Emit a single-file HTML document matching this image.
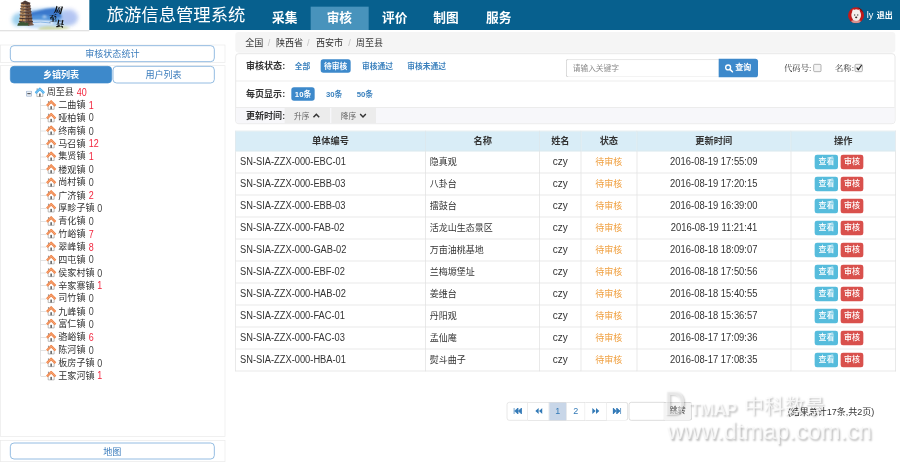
<!DOCTYPE html>
<html lang="zh-CN">
<head>
<meta charset="utf-8">
<title>旅游信息管理系统</title>
<style>
*{box-sizing:border-box;margin:0;padding:0}
html,body{width:900px;height:470px;overflow:hidden;background:#fff}
body{font-family:"Liberation Sans","Noto Sans CJK SC",sans-serif;color:#333}
#w{position:absolute;left:0;top:0;width:1350px;height:705px;transform:scale(.6666667);transform-origin:0 0;font-size:13.55px;line-height:20px;overflow:hidden;background:#fff}
.abs{position:absolute}
#hd{left:0;top:0;width:1350px;height:45px;background:#07608e}
#logo{left:0;top:0;width:133.5px;height:45px;background:#fff}
#logoline{left:0;top:45px;width:133.5px;height:1.5px;background:#e2e2e2}
#title{left:160px;top:0;height:45px;line-height:44px;font-size:26px;color:#fff;white-space:nowrap}
.nav{top:9.6px;height:35.4px;line-height:34px;font-size:19px;font-weight:bold;color:#fff;white-space:nowrap}
#navact{left:466px;top:9.6px;width:87px;height:35.4px;background:#4893bc}
.user{top:0;height:45px;line-height:46px;color:#fff;font-size:12px;white-space:nowrap}
/* left */
.pbox{border:1.5px solid #e9e9e9;background:#fff}
.btn-o{border:1.5px solid #5f9bd3;border-radius:6px;background:#fff;color:#3a7cbc;font-size:13.6px;text-align:center;white-space:nowrap}
.btn-a{background:#3d89cb;border:1.5px solid #3d89cb;color:#fff;font-weight:bold;font-size:13.6px;text-align:center;white-space:nowrap}
#tree{left:0;top:129px;width:330px;font-size:13.55px;list-style:none}
#tree li{position:relative;height:19.357px;line-height:19.357px;white-space:nowrap;list-style:none}
#tree li.root{height:19.1px}
.hs{position:absolute;width:15.5px;height:15.5px;top:1.5px}
#tree li .hs{left:69px}
#tree li.root .hs{left:52px}
#tree li .nm{display:inline-block;margin-left:87.5px;color:#333;vertical-align:top}
#tree li.root .nm{margin-left:70px}
#tree li .r,#tree li .z{display:inline-block;vertical-align:top;margin-left:4.5px;font-size:16px;transform:scaleX(.84);transform-origin:0 50%}
.r{color:#f2243c}.z{color:#444}
.ln{position:absolute;left:60.2px;top:0;width:9px;height:100%;border-left:1.3px solid #d4d4d4}
.ln:after{content:"";position:absolute;left:0;top:9.5px;width:8px;border-top:1.3px solid #d4d4d4}
#tree li:last-child .ln{height:10px}
/* main */
#bc{left:353px;top:47.5px;width:990px;height:31.8px;background:#f5f5f5;border-radius:5px;line-height:32px;white-space:nowrap}
#bc span{position:absolute;top:1.500px}
#bc .s{color:#c4c4c4}
#fp{left:353px;top:80.3px;width:990px;height:105.5px;border:1px solid #ddd;border-radius:5px;background:#fff;overflow:hidden}
#fp .lb{position:absolute;left:15px;font-weight:bold;font-size:13.55px;color:#333;white-space:nowrap}
#fp .lk{position:absolute;font-size:11.6px;font-weight:bold;color:#3a80bd;white-space:nowrap}
#fp .pill{position:absolute;height:20px;line-height:20px;border-radius:4px;background:#3d89cb;color:#fff;font-weight:bold;font-size:11.6px;text-align:center;white-space:nowrap}
#fp .hl{position:absolute;left:0;width:100%;height:1px;background:#e3e3e3}
#r3{position:absolute;left:0;top:79.5px;width:100%;height:25px;background:#f7f7fa}
.sb{position:absolute;top:79.5px;height:24px;background:#ececec;color:#666;font-size:11.6px;line-height:24px;white-space:nowrap}
#q{position:absolute;left:495px;top:6px;width:230px;height:28px;border:1px solid #ccc;border-right:0;border-radius:4px 0 0 4px;font-size:11.6px;color:#8a8a8a;line-height:26px;padding-left:9px;box-shadow:inset 0 1px 1px rgba(0,0,0,.075)}
#qb{position:absolute;left:724px;top:6px;width:58.5px;height:28px;background:#3d89cb;border-radius:0 4px 4px 0;color:#fff;font-weight:bold;font-size:12px;line-height:27px;white-space:nowrap}
.kl{position:absolute;top:7.5px;font-family:"Liberation Serif","Noto Serif CJK SC",serif;font-size:12.5px;color:#333;white-space:nowrap;line-height:26px}
.cb{position:absolute;width:12px;height:12px;border:1px solid #8f8f8f;border-radius:2px;background:#f4f4f4}
/* table */
#tb{left:352.5px;top:196px;width:990.5px;border-collapse:collapse;table-layout:fixed;font-size:13.5px}
#tb th{height:30px;background:#d9edf7;border:1px solid #dfe6ea;font-weight:bold;font-size:13.8px;text-align:center;color:#333;padding:0;line-height:18px}
#tb td{height:33px;border:1px solid #dedede;padding:0;line-height:20px;white-space:nowrap;color:#333;vertical-align:middle}
#tb td.c{text-align:center}
#tb td.c1{padding-left:6px}
.sx{display:inline-block;font-size:15px;transform:scaleX(.93);transform-origin:0 50%}
.sd{display:inline-block;font-size:15px;transform:scaleX(.94);transform-origin:50% 50%}
#tb td.nm3{font-size:15px}
#tb td.op{padding-right:12px}
#tb td.c2{padding-left:5.5px}
#tb td.st{color:#f0a040}
.bx{display:inline-block;width:34.8px;height:22px;line-height:21px;border-radius:3.5px;color:#fff;font-size:12px;text-align:center;vertical-align:middle;font-weight:500}
.bi{background:#56bcdc;margin-right:3.6px}
.bd{background:#d9504c}
/* pager */
.pg{top:602.5px;height:28px;border:1px solid #ddd;border-left:0;background:#fff;color:#337ab7;text-align:center;line-height:26px;font-size:13.5px}
.wm{color:rgba(255,255,255,.72);white-space:nowrap;text-shadow:2px 2px 3px rgba(0,0,0,.27)}
</style>
</head>
<body>
<div id="w">
<!-- header -->
<div id="hd" class="abs"></div>
<div id="logo" class="abs">
<svg width="133.5" height="45" viewBox="0 0 133.5 45">
<defs>
<filter id="b1" x="-30%" y="-30%" width="160%" height="160%"><feGaussianBlur stdDeviation="3"/></filter>
<filter id="b2" x="-30%" y="-30%" width="160%" height="160%"><feGaussianBlur stdDeviation="1.200"/></filter>
<filter id="b3" x="-30%" y="-30%" width="160%" height="160%"><feGaussianBlur stdDeviation=".55"/></filter>
</defs>
<ellipse cx="68" cy="27.500" rx="46" ry="14" fill="#a9cff2" filter="url(#b1)"/>
<ellipse cx="104" cy="26" rx="13" ry="12" fill="#b4c2f2" opacity=".85" filter="url(#b1)"/>
<ellipse cx="27" cy="30" rx="9" ry="9" fill="#9fd2ee" filter="url(#b1)"/>
<path d="M46 18.500L56 16L69 13.300L81 11.700L88 13L93 27L46 27.500Z" fill="#3a78cc" filter="url(#b2)"/>
<path d="M47 24Q60 21 72 23Q82 25 90 27L90 31.500Q68 33 47 30Z" fill="#4f92da" filter="url(#b2)"/>
<path d="M63 26.500L66.500 22.500L71 26.800Z" fill="#f4f8fd" opacity=".75" filter="url(#b2)"/>
<path d="M46 31Q62 29.500 80 32L80 37.500Q62 39 46 37Z" fill="#dbe9f8" filter="url(#b2)"/>
<path d="M47 33.800Q60 32 76 34.500" stroke="#7fb0e4" stroke-width="1.300" fill="none" filter="url(#b3)"/>
<path d="M58 42Q70 37.500 82 40.500Q94 37.500 106 42.500Q82 45.500 58 44.500Z" fill="#cdd6a2" filter="url(#b2)"/>
<g filter="url(#b3)">
<path d="M37.600 0.800L45.500 4.600L38.400 5.600L31.200 4.600Z" fill="#4b3a36"/>
<path d="M32.00 4.00L37.84 4.60L37.88 8.70L31.59 8.10Z" fill="#c0915f"/>
<path d="M37.84 4.60L44.70 4.00L45.28 8.10L37.88 8.70Z" fill="#7a5641"/>
<path d="M30.90 4.00L37.84 4.70L45.80 4.00L45.30 5.50L37.84 6.20L31.40 5.50Z" fill="#43322f"/>
<rect x="34.42" y="6.60" width="1.100" height="0.90" fill="#4a3228"/>
<rect x="40.77" y="6.60" width="1.100" height="0.90" fill="#3a2620"/>
<path d="M31.59 8.10L37.88 8.70L37.93 13.00L31.15 12.40Z" fill="#c0915f"/>
<path d="M37.88 8.70L45.28 8.10L45.88 12.40L37.93 13.00Z" fill="#7a5641"/>
<path d="M30.49 8.10L37.88 8.80L46.38 8.10L45.88 9.60L37.88 10.30L30.99 9.60Z" fill="#43322f"/>
<rect x="34.24" y="10.70" width="1.100" height="1.10" fill="#4a3228"/>
<rect x="41.08" y="10.70" width="1.100" height="1.10" fill="#3a2620"/>
<path d="M31.15 12.40L37.93 13.00L37.97 17.50L30.70 16.90Z" fill="#c0915f"/>
<path d="M37.93 13.00L45.88 12.40L46.51 16.90L37.97 17.50Z" fill="#7a5641"/>
<path d="M30.05 12.40L37.93 13.10L46.98 12.40L46.48 13.90L37.93 14.60L30.55 13.90Z" fill="#43322f"/>
<rect x="34.04" y="15.00" width="1.100" height="1.30" fill="#4a3228"/>
<rect x="41.40" y="15.00" width="1.100" height="1.30" fill="#3a2620"/>
<path d="M30.70 16.90L37.97 17.50L38.02 22.20L30.22 21.60Z" fill="#c0915f"/>
<path d="M37.97 17.50L46.51 16.90L47.18 21.60L38.02 22.20Z" fill="#7a5641"/>
<path d="M29.60 16.90L37.97 17.60L47.61 16.90L47.11 18.40L37.97 19.10L30.10 18.40Z" fill="#43322f"/>
<rect x="33.84" y="19.50" width="1.100" height="1.50" fill="#4a3228"/>
<rect x="41.74" y="19.50" width="1.100" height="1.50" fill="#3a2620"/>
<path d="M30.22 21.60L38.02 22.20L38.07 27.10L29.73 26.50Z" fill="#c0915f"/>
<path d="M38.02 22.20L47.18 21.60L47.87 26.50L38.07 27.10Z" fill="#7a5641"/>
<path d="M29.12 21.60L38.02 22.30L48.28 21.60L47.78 23.10L38.02 23.80L29.62 23.10Z" fill="#43322f"/>
<rect x="33.62" y="24.20" width="1.100" height="1.70" fill="#4a3228"/>
<rect x="42.10" y="24.20" width="1.100" height="1.70" fill="#3a2620"/>
<path d="M29.73 26.50L38.07 27.10L38.12 32.10L29.22 31.50Z" fill="#c0915f"/>
<path d="M38.07 27.10L47.87 26.50L48.57 31.50L38.12 32.10Z" fill="#7a5641"/>
<path d="M28.63 26.50L38.07 27.20L48.97 26.50L48.47 28.00L38.07 28.70L29.13 28.00Z" fill="#43322f"/>
<rect x="33.40" y="29.10" width="1.100" height="1.80" fill="#4a3228"/>
<rect x="42.47" y="29.10" width="1.100" height="1.80" fill="#3a2620"/>
<path d="M29.22 31.50L38.12 32.10L38.18 37.30L28.70 36.70Z" fill="#c0915f"/>
<path d="M38.12 32.10L48.57 31.50L49.30 36.70L38.18 37.30Z" fill="#7a5641"/>
<path d="M28.12 31.50L38.12 32.20L49.67 31.50L49.17 33.00L38.12 33.70L28.62 33.00Z" fill="#43322f"/>
<rect x="33.17" y="34.10" width="1.100" height="2.00" fill="#4a3228"/>
<rect x="42.85" y="34.10" width="1.100" height="2.00" fill="#3a2620"/>
<path d="M26 38.500q0.500 -5 3.500 -4.500q1.500 -2.500 4 -0.500q2.500 -1.500 4.500 1q2.500 -1.500 4.500 0.500l1.500 3.500z" fill="#3a5636"/>
<path d="M42 38.500l8.500 -0.800l0 -1.200l-8 0z" fill="#6a4a3a"/>
</g>
<g font-family="'Liberation Serif','Noto Serif CJK SC',serif" font-weight="900" fill="#0b0b0b">
<text x="83.500" y="20.500" font-size="13.500" transform="rotate(7 90 15) skewX(-8)">周</text>
<text x="77.500" y="31.500" font-size="12.500" transform="rotate(-8 83 28) skewX(-8)">至</text>
<text x="87.500" y="40.800" font-size="12.800" transform="rotate(5 94 36) skewX(-6)">县</text>
</g>
</svg>
</div>
<div id="logoline" class="abs"></div>
<div id="title" class="abs">旅游信息管理系统</div>
<div id="navact" class="abs"></div>
<div class="abs nav" style="left:408px">采集</div>
<div class="abs nav" style="left:490px">审核</div>
<div class="abs nav" style="left:573px">评价</div>
<div class="abs nav" style="left:650px">制图</div>
<div class="abs nav" style="left:729px">服务</div>
<div class="abs" style="left:1271.900px;top:10.500px;width:24.200px;height:24.200px;border-radius:50%;background:#c21a1a;overflow:hidden">
<svg width="24.200" height="24.200" viewBox="0 0 24.200 24.200"><path d="M14 0L24 8V0Z" fill="#5a0d0d"/><path d="M0 18L8 24H18L24 18V24H0Z" fill="#a31414"/><ellipse cx="12.300" cy="11.600" rx="7.300" ry="8.800" fill="#f4efec"/><path d="M6 7L7.500 2.500L10.500 5.500ZM18 7L17 2.500L14 5.500Z" fill="#f4efec"/><circle cx="10" cy="11.500" r="1" fill="#4a4040"/><circle cx="14.600" cy="11.500" r="1" fill="#4a4040"/><ellipse cx="12.300" cy="15" rx="1.700" ry="1.300" fill="#3a3030"/><path d="M5 20Q12 17 19 20L19 24H5Z" fill="#e9e2de" opacity=".6"/></svg>
</div>
<div class="abs user" style="left:1300px;font-size:13.800px;top:-0.500px">ly</div>
<div class="abs user" style="left:1315px;font-weight:bold">退出</div>

<!-- left column -->
<div class="abs pbox" style="left:0;top:66.500px;width:337.500px;height:27.500px"></div>
<div class="abs pbox" style="left:0;top:98px;width:337.500px;height:556.500px"></div>
<div class="abs btn-o" style="left:15px;top:68px;width:307px;height:24.5px;line-height:25.5px">审核状态统计</div>
<div class="abs btn-o" style="left:168.500px;top:99px;width:153.500px;height:25.500px;line-height:26.500px">用户列表</div>
<div class="abs btn-a" style="left:15px;top:99px;width:153px;height:25.500px;line-height:26.500px;border-radius:6px">乡镇列表</div>
<ul id="tree" class="abs">
<li class="root"><svg class="abs" style="left:39px;top:6.500px" width="9" height="9" viewBox="0 0 9 9"><rect x=".5" y=".5" width="8" height="8" rx="1" fill="#e9eff6" stroke="#86a0c2"/><path d="M2 4.500H7" stroke="#222" stroke-width="1.300"/></svg><svg class="hs" viewBox="0 0 16 16"><rect x="3" y="1.600" width="1.800" height="3.500" fill="#9a9a9a"/><path d="M3.400 8V14.400H12.600V8L8 3.800Z" fill="#fff" stroke="#a0a0a0" stroke-width="1.100"/><rect x="6.700" y="9.600" width="2.600" height="4.800" fill="#6e6e6e"/><path d="M1.300 9L8 2.400L14.700 9" fill="none" stroke="#4fb0ee" stroke-width="3.700" stroke-linejoin="miter"/><path d="M1.800 8.600L8 2.500L14.200 8.600" fill="none" stroke="#c8e8fb" stroke-width="1.100" stroke-dasharray="1.300 .9"/></svg><span class="nm">周至县</span><span class="r">40</span></li>
<li><i class="ln"></i><svg class="hs" viewBox="0 0 16 16"><rect x="3" y="1.600" width="1.800" height="3.500" fill="#9a9a9a"/><path d="M3.400 8V14.400H12.600V8L8 3.800Z" fill="#fff" stroke="#a0a0a0" stroke-width="1.100"/><rect x="6.700" y="9.600" width="2.600" height="4.800" fill="#6e6e6e"/><path d="M1.300 9L8 2.400L14.700 9" fill="none" stroke="#f0854a" stroke-width="3.700" stroke-linejoin="miter"/><path d="M1.800 8.600L8 2.500L14.200 8.600" fill="none" stroke="#fbd0b0" stroke-width="1.100" stroke-dasharray="1.300 .9"/></svg><span class="nm">二曲镇</span><span class="r">1</span></li>
<li><i class="ln"></i><svg class="hs" viewBox="0 0 16 16"><rect x="3" y="1.600" width="1.800" height="3.500" fill="#9a9a9a"/><path d="M3.400 8V14.400H12.600V8L8 3.800Z" fill="#fff" stroke="#a0a0a0" stroke-width="1.100"/><rect x="6.700" y="9.600" width="2.600" height="4.800" fill="#6e6e6e"/><path d="M1.300 9L8 2.400L14.700 9" fill="none" stroke="#f0854a" stroke-width="3.700" stroke-linejoin="miter"/><path d="M1.800 8.600L8 2.500L14.200 8.600" fill="none" stroke="#fbd0b0" stroke-width="1.100" stroke-dasharray="1.300 .9"/></svg><span class="nm">哑柏镇</span><span class="z">0</span></li>
<li><i class="ln"></i><svg class="hs" viewBox="0 0 16 16"><rect x="3" y="1.600" width="1.800" height="3.500" fill="#9a9a9a"/><path d="M3.400 8V14.400H12.600V8L8 3.800Z" fill="#fff" stroke="#a0a0a0" stroke-width="1.100"/><rect x="6.700" y="9.600" width="2.600" height="4.800" fill="#6e6e6e"/><path d="M1.300 9L8 2.400L14.700 9" fill="none" stroke="#f0854a" stroke-width="3.700" stroke-linejoin="miter"/><path d="M1.800 8.600L8 2.500L14.200 8.600" fill="none" stroke="#fbd0b0" stroke-width="1.100" stroke-dasharray="1.300 .9"/></svg><span class="nm">终南镇</span><span class="z">0</span></li>
<li><i class="ln"></i><svg class="hs" viewBox="0 0 16 16"><rect x="3" y="1.600" width="1.800" height="3.500" fill="#9a9a9a"/><path d="M3.400 8V14.400H12.600V8L8 3.800Z" fill="#fff" stroke="#a0a0a0" stroke-width="1.100"/><rect x="6.700" y="9.600" width="2.600" height="4.800" fill="#6e6e6e"/><path d="M1.300 9L8 2.400L14.700 9" fill="none" stroke="#f0854a" stroke-width="3.700" stroke-linejoin="miter"/><path d="M1.800 8.600L8 2.500L14.200 8.600" fill="none" stroke="#fbd0b0" stroke-width="1.100" stroke-dasharray="1.300 .9"/></svg><span class="nm">马召镇</span><span class="r">12</span></li>
<li><i class="ln"></i><svg class="hs" viewBox="0 0 16 16"><rect x="3" y="1.600" width="1.800" height="3.500" fill="#9a9a9a"/><path d="M3.400 8V14.400H12.600V8L8 3.800Z" fill="#fff" stroke="#a0a0a0" stroke-width="1.100"/><rect x="6.700" y="9.600" width="2.600" height="4.800" fill="#6e6e6e"/><path d="M1.300 9L8 2.400L14.700 9" fill="none" stroke="#f0854a" stroke-width="3.700" stroke-linejoin="miter"/><path d="M1.800 8.600L8 2.500L14.200 8.600" fill="none" stroke="#fbd0b0" stroke-width="1.100" stroke-dasharray="1.300 .9"/></svg><span class="nm">集贤镇</span><span class="r">1</span></li>
<li><i class="ln"></i><svg class="hs" viewBox="0 0 16 16"><rect x="3" y="1.600" width="1.800" height="3.500" fill="#9a9a9a"/><path d="M3.400 8V14.400H12.600V8L8 3.800Z" fill="#fff" stroke="#a0a0a0" stroke-width="1.100"/><rect x="6.700" y="9.600" width="2.600" height="4.800" fill="#6e6e6e"/><path d="M1.300 9L8 2.400L14.700 9" fill="none" stroke="#f0854a" stroke-width="3.700" stroke-linejoin="miter"/><path d="M1.800 8.600L8 2.500L14.200 8.600" fill="none" stroke="#fbd0b0" stroke-width="1.100" stroke-dasharray="1.300 .9"/></svg><span class="nm">楼观镇</span><span class="z">0</span></li>
<li><i class="ln"></i><svg class="hs" viewBox="0 0 16 16"><rect x="3" y="1.600" width="1.800" height="3.500" fill="#9a9a9a"/><path d="M3.400 8V14.400H12.600V8L8 3.800Z" fill="#fff" stroke="#a0a0a0" stroke-width="1.100"/><rect x="6.700" y="9.600" width="2.600" height="4.800" fill="#6e6e6e"/><path d="M1.300 9L8 2.400L14.700 9" fill="none" stroke="#f0854a" stroke-width="3.700" stroke-linejoin="miter"/><path d="M1.800 8.600L8 2.500L14.200 8.600" fill="none" stroke="#fbd0b0" stroke-width="1.100" stroke-dasharray="1.300 .9"/></svg><span class="nm">尚村镇</span><span class="z">0</span></li>
<li><i class="ln"></i><svg class="hs" viewBox="0 0 16 16"><rect x="3" y="1.600" width="1.800" height="3.500" fill="#9a9a9a"/><path d="M3.400 8V14.400H12.600V8L8 3.800Z" fill="#fff" stroke="#a0a0a0" stroke-width="1.100"/><rect x="6.700" y="9.600" width="2.600" height="4.800" fill="#6e6e6e"/><path d="M1.300 9L8 2.400L14.700 9" fill="none" stroke="#f0854a" stroke-width="3.700" stroke-linejoin="miter"/><path d="M1.800 8.600L8 2.500L14.200 8.600" fill="none" stroke="#fbd0b0" stroke-width="1.100" stroke-dasharray="1.300 .9"/></svg><span class="nm">广济镇</span><span class="r">2</span></li>
<li><i class="ln"></i><svg class="hs" viewBox="0 0 16 16"><rect x="3" y="1.600" width="1.800" height="3.500" fill="#9a9a9a"/><path d="M3.400 8V14.400H12.600V8L8 3.800Z" fill="#fff" stroke="#a0a0a0" stroke-width="1.100"/><rect x="6.700" y="9.600" width="2.600" height="4.800" fill="#6e6e6e"/><path d="M1.300 9L8 2.400L14.700 9" fill="none" stroke="#f0854a" stroke-width="3.700" stroke-linejoin="miter"/><path d="M1.800 8.600L8 2.500L14.200 8.600" fill="none" stroke="#fbd0b0" stroke-width="1.100" stroke-dasharray="1.300 .9"/></svg><span class="nm">厚畛子镇</span><span class="z">0</span></li>
<li><i class="ln"></i><svg class="hs" viewBox="0 0 16 16"><rect x="3" y="1.600" width="1.800" height="3.500" fill="#9a9a9a"/><path d="M3.400 8V14.400H12.600V8L8 3.800Z" fill="#fff" stroke="#a0a0a0" stroke-width="1.100"/><rect x="6.700" y="9.600" width="2.600" height="4.800" fill="#6e6e6e"/><path d="M1.300 9L8 2.400L14.700 9" fill="none" stroke="#f0854a" stroke-width="3.700" stroke-linejoin="miter"/><path d="M1.800 8.600L8 2.500L14.200 8.600" fill="none" stroke="#fbd0b0" stroke-width="1.100" stroke-dasharray="1.300 .9"/></svg><span class="nm">青化镇</span><span class="z">0</span></li>
<li><i class="ln"></i><svg class="hs" viewBox="0 0 16 16"><rect x="3" y="1.600" width="1.800" height="3.500" fill="#9a9a9a"/><path d="M3.400 8V14.400H12.600V8L8 3.800Z" fill="#fff" stroke="#a0a0a0" stroke-width="1.100"/><rect x="6.700" y="9.600" width="2.600" height="4.800" fill="#6e6e6e"/><path d="M1.300 9L8 2.400L14.700 9" fill="none" stroke="#f0854a" stroke-width="3.700" stroke-linejoin="miter"/><path d="M1.800 8.600L8 2.500L14.200 8.600" fill="none" stroke="#fbd0b0" stroke-width="1.100" stroke-dasharray="1.300 .9"/></svg><span class="nm">竹峪镇</span><span class="r">7</span></li>
<li><i class="ln"></i><svg class="hs" viewBox="0 0 16 16"><rect x="3" y="1.600" width="1.800" height="3.500" fill="#9a9a9a"/><path d="M3.400 8V14.400H12.600V8L8 3.800Z" fill="#fff" stroke="#a0a0a0" stroke-width="1.100"/><rect x="6.700" y="9.600" width="2.600" height="4.800" fill="#6e6e6e"/><path d="M1.300 9L8 2.400L14.700 9" fill="none" stroke="#f0854a" stroke-width="3.700" stroke-linejoin="miter"/><path d="M1.800 8.600L8 2.500L14.200 8.600" fill="none" stroke="#fbd0b0" stroke-width="1.100" stroke-dasharray="1.300 .9"/></svg><span class="nm">翠峰镇</span><span class="r">8</span></li>
<li><i class="ln"></i><svg class="hs" viewBox="0 0 16 16"><rect x="3" y="1.600" width="1.800" height="3.500" fill="#9a9a9a"/><path d="M3.400 8V14.400H12.600V8L8 3.800Z" fill="#fff" stroke="#a0a0a0" stroke-width="1.100"/><rect x="6.700" y="9.600" width="2.600" height="4.800" fill="#6e6e6e"/><path d="M1.300 9L8 2.400L14.700 9" fill="none" stroke="#f0854a" stroke-width="3.700" stroke-linejoin="miter"/><path d="M1.800 8.600L8 2.500L14.200 8.600" fill="none" stroke="#fbd0b0" stroke-width="1.100" stroke-dasharray="1.300 .9"/></svg><span class="nm">四屯镇</span><span class="z">0</span></li>
<li><i class="ln"></i><svg class="hs" viewBox="0 0 16 16"><rect x="3" y="1.600" width="1.800" height="3.500" fill="#9a9a9a"/><path d="M3.400 8V14.400H12.600V8L8 3.800Z" fill="#fff" stroke="#a0a0a0" stroke-width="1.100"/><rect x="6.700" y="9.600" width="2.600" height="4.800" fill="#6e6e6e"/><path d="M1.300 9L8 2.400L14.700 9" fill="none" stroke="#f0854a" stroke-width="3.700" stroke-linejoin="miter"/><path d="M1.800 8.600L8 2.500L14.200 8.600" fill="none" stroke="#fbd0b0" stroke-width="1.100" stroke-dasharray="1.300 .9"/></svg><span class="nm">侯家村镇</span><span class="z">0</span></li>
<li><i class="ln"></i><svg class="hs" viewBox="0 0 16 16"><rect x="3" y="1.600" width="1.800" height="3.500" fill="#9a9a9a"/><path d="M3.400 8V14.400H12.600V8L8 3.800Z" fill="#fff" stroke="#a0a0a0" stroke-width="1.100"/><rect x="6.700" y="9.600" width="2.600" height="4.800" fill="#6e6e6e"/><path d="M1.300 9L8 2.400L14.700 9" fill="none" stroke="#f0854a" stroke-width="3.700" stroke-linejoin="miter"/><path d="M1.800 8.600L8 2.500L14.200 8.600" fill="none" stroke="#fbd0b0" stroke-width="1.100" stroke-dasharray="1.300 .9"/></svg><span class="nm">辛家寨镇</span><span class="r">1</span></li>
<li><i class="ln"></i><svg class="hs" viewBox="0 0 16 16"><rect x="3" y="1.600" width="1.800" height="3.500" fill="#9a9a9a"/><path d="M3.400 8V14.400H12.600V8L8 3.800Z" fill="#fff" stroke="#a0a0a0" stroke-width="1.100"/><rect x="6.700" y="9.600" width="2.600" height="4.800" fill="#6e6e6e"/><path d="M1.300 9L8 2.400L14.700 9" fill="none" stroke="#f0854a" stroke-width="3.700" stroke-linejoin="miter"/><path d="M1.800 8.600L8 2.500L14.200 8.600" fill="none" stroke="#fbd0b0" stroke-width="1.100" stroke-dasharray="1.300 .9"/></svg><span class="nm">司竹镇</span><span class="z">0</span></li>
<li><i class="ln"></i><svg class="hs" viewBox="0 0 16 16"><rect x="3" y="1.600" width="1.800" height="3.500" fill="#9a9a9a"/><path d="M3.400 8V14.400H12.600V8L8 3.800Z" fill="#fff" stroke="#a0a0a0" stroke-width="1.100"/><rect x="6.700" y="9.600" width="2.600" height="4.800" fill="#6e6e6e"/><path d="M1.300 9L8 2.400L14.700 9" fill="none" stroke="#f0854a" stroke-width="3.700" stroke-linejoin="miter"/><path d="M1.800 8.600L8 2.500L14.200 8.600" fill="none" stroke="#fbd0b0" stroke-width="1.100" stroke-dasharray="1.300 .9"/></svg><span class="nm">九峰镇</span><span class="z">0</span></li>
<li><i class="ln"></i><svg class="hs" viewBox="0 0 16 16"><rect x="3" y="1.600" width="1.800" height="3.500" fill="#9a9a9a"/><path d="M3.400 8V14.400H12.600V8L8 3.800Z" fill="#fff" stroke="#a0a0a0" stroke-width="1.100"/><rect x="6.700" y="9.600" width="2.600" height="4.800" fill="#6e6e6e"/><path d="M1.300 9L8 2.400L14.700 9" fill="none" stroke="#f0854a" stroke-width="3.700" stroke-linejoin="miter"/><path d="M1.800 8.600L8 2.500L14.200 8.600" fill="none" stroke="#fbd0b0" stroke-width="1.100" stroke-dasharray="1.300 .9"/></svg><span class="nm">富仁镇</span><span class="z">0</span></li>
<li><i class="ln"></i><svg class="hs" viewBox="0 0 16 16"><rect x="3" y="1.600" width="1.800" height="3.500" fill="#9a9a9a"/><path d="M3.400 8V14.400H12.600V8L8 3.800Z" fill="#fff" stroke="#a0a0a0" stroke-width="1.100"/><rect x="6.700" y="9.600" width="2.600" height="4.800" fill="#6e6e6e"/><path d="M1.300 9L8 2.400L14.700 9" fill="none" stroke="#f0854a" stroke-width="3.700" stroke-linejoin="miter"/><path d="M1.800 8.600L8 2.500L14.200 8.600" fill="none" stroke="#fbd0b0" stroke-width="1.100" stroke-dasharray="1.300 .9"/></svg><span class="nm">骆峪镇</span><span class="r">6</span></li>
<li><i class="ln"></i><svg class="hs" viewBox="0 0 16 16"><rect x="3" y="1.600" width="1.800" height="3.500" fill="#9a9a9a"/><path d="M3.400 8V14.400H12.600V8L8 3.800Z" fill="#fff" stroke="#a0a0a0" stroke-width="1.100"/><rect x="6.700" y="9.600" width="2.600" height="4.800" fill="#6e6e6e"/><path d="M1.300 9L8 2.400L14.700 9" fill="none" stroke="#f0854a" stroke-width="3.700" stroke-linejoin="miter"/><path d="M1.800 8.600L8 2.500L14.200 8.600" fill="none" stroke="#fbd0b0" stroke-width="1.100" stroke-dasharray="1.300 .9"/></svg><span class="nm">陈河镇</span><span class="z">0</span></li>
<li><i class="ln"></i><svg class="hs" viewBox="0 0 16 16"><rect x="3" y="1.600" width="1.800" height="3.500" fill="#9a9a9a"/><path d="M3.400 8V14.400H12.600V8L8 3.800Z" fill="#fff" stroke="#a0a0a0" stroke-width="1.100"/><rect x="6.700" y="9.600" width="2.600" height="4.800" fill="#6e6e6e"/><path d="M1.300 9L8 2.400L14.700 9" fill="none" stroke="#f0854a" stroke-width="3.700" stroke-linejoin="miter"/><path d="M1.800 8.600L8 2.500L14.200 8.600" fill="none" stroke="#fbd0b0" stroke-width="1.100" stroke-dasharray="1.300 .9"/></svg><span class="nm">板房子镇</span><span class="z">0</span></li>
<li><i class="ln"></i><svg class="hs" viewBox="0 0 16 16"><rect x="3" y="1.600" width="1.800" height="3.500" fill="#9a9a9a"/><path d="M3.400 8V14.400H12.600V8L8 3.800Z" fill="#fff" stroke="#a0a0a0" stroke-width="1.100"/><rect x="6.700" y="9.600" width="2.600" height="4.800" fill="#6e6e6e"/><path d="M1.300 9L8 2.400L14.700 9" fill="none" stroke="#f0854a" stroke-width="3.700" stroke-linejoin="miter"/><path d="M1.800 8.600L8 2.500L14.200 8.600" fill="none" stroke="#fbd0b0" stroke-width="1.100" stroke-dasharray="1.300 .9"/></svg><span class="nm">王家河镇</span><span class="r">1</span></li>
</ul>
<div class="abs pbox" style="left:0;top:660px;width:337.5px;height:32.5px"></div>
<div class="abs btn-o" style="left:15px;top:664px;width:307px;height:24.5px;line-height:25.5px">地图</div>

<!-- breadcrumb -->
<div id="bc" class="abs">
<span style="left:15px">全国</span><span class="s" style="left:48.500px">/</span>
<span style="left:61px">陕西省</span><span class="s" style="left:107.500px">/</span>
<span style="left:121px">西安市</span><span class="s" style="left:169.500px">/</span>
<span style="left:181px">周至县</span>
</div>

<!-- filter -->
<div id="fp" class="abs"><div style="position:absolute;left:0;top:1px;width:100%;height:104.5px">
<div class="lb" style="top:7.500px">审核状态:</div>
<div class="lk" style="left:88px;top:7.500px">全部</div>
<div class="pill" style="left:127px;top:7px;width:45px">待审核</div>
<div class="lk" style="left:189px;top:7.500px">审核通过</div>
<div class="lk" style="left:257px;top:7.500px">审核未通过</div>
<div class="hl" style="top:38.500px"></div>
<div class="lb" style="top:48.500px">每页显示:</div>
<div class="pill" style="left:83px;top:48.500px;width:35px">10条</div>
<div class="lk" style="left:135px;top:48.500px">30条</div>
<div class="lk" style="left:181px;top:48.500px">50条</div>
<div class="hl" style="top:78.500px"></div>
<div id="r3"></div>
<div class="lb" style="top:81.500px">更新时间:</div>
<div class="sb" style="left:73px;width:68px;padding-left:14px">升序<svg style="position:absolute;left:42px;top:7px" width="11" height="9" viewBox="0 0 11 9"><path d="M1.200 7L5.500 2.500L9.800 7" fill="none" stroke="#333" stroke-width="2.200"/></svg></div>
<div class="sb" style="left:143px;width:67px;padding-left:14px">降序<svg style="position:absolute;left:42px;top:7px" width="11" height="9" viewBox="0 0 11 9"><path d="M1.200 2L5.500 6.500L9.800 2" fill="none" stroke="#333" stroke-width="2.200"/></svg></div>
<div id="q">请输入关键字</div>
<div id="qb"><svg style="position:absolute;left:9px;top:7.500px" width="13" height="13" viewBox="0 0 13 13"><circle cx="5.200" cy="5.200" r="3.700" fill="none" stroke="#fff" stroke-width="2"/><path d="M8 8L12 12" stroke="#fff" stroke-width="2.400" stroke-linecap="round"/></svg><span style="position:absolute;left:25px">查询</span></div>
<div class="kl" style="left:822px">代码号:</div>
<div class="cb" style="left:866px;top:13.500px"></div>
<div class="kl" style="left:898.500px">名称:</div>
<div class="cb" style="left:927.500px;top:13.500px"><svg style="position:absolute;left:0;top:-1px" width="11" height="11" viewBox="0 0 11 11"><path d="M2 5.500L4.500 8.500L9.500 1.500" fill="none" stroke="#222" stroke-width="1.800"/></svg></div>
</div></div>

<!-- table -->
<table id="tb" class="abs">
<colgroup><col style="width:285.500px"><col style="width:171px"><col style="width:62px"><col style="width:83.600px"><col style="width:231px"><col style="width:157.400px"></colgroup>
<tr><th>单体编号</th><th>名称</th><th>姓名</th><th>状态</th><th>更新时间</th><th>操作</th></tr>
<tr><td class="c1"><span class="sx">SN-SIA-ZZX-000-EBC-01</span></td><td class="c2">隐真观</td><td class="c nm3">czy</td><td class="c st">待审核</td><td class="c dt"><span class="sd">2016-08-19 17:55:09</span></td><td class="c op"><span class="bx bi">查看</span><span class="bx bd">审核</span></td></tr>
<tr><td class="c1"><span class="sx">SN-SIA-ZZX-000-EBB-03</span></td><td class="c2">八卦台</td><td class="c nm3">czy</td><td class="c st">待审核</td><td class="c dt"><span class="sd">2016-08-19 17:20:15</span></td><td class="c op"><span class="bx bi">查看</span><span class="bx bd">审核</span></td></tr>
<tr><td class="c1"><span class="sx">SN-SIA-ZZX-000-EBB-03</span></td><td class="c2">擂鼓台</td><td class="c nm3">czy</td><td class="c st">待审核</td><td class="c dt"><span class="sd">2016-08-19 16:39:00</span></td><td class="c op"><span class="bx bi">查看</span><span class="bx bd">审核</span></td></tr>
<tr><td class="c1"><span class="sx">SN-SIA-ZZX-000-FAB-02</span></td><td class="c2">活龙山生态景区</td><td class="c nm3">czy</td><td class="c st">待审核</td><td class="c dt"><span class="sd">2016-08-19 11:21:41</span></td><td class="c op"><span class="bx bi">查看</span><span class="bx bd">审核</span></td></tr>
<tr><td class="c1"><span class="sx">SN-SIA-ZZX-000-GAB-02</span></td><td class="c2">万亩油桃基地</td><td class="c nm3">czy</td><td class="c st">待审核</td><td class="c dt"><span class="sd">2016-08-18 18:09:07</span></td><td class="c op"><span class="bx bi">查看</span><span class="bx bd">审核</span></td></tr>
<tr><td class="c1"><span class="sx">SN-SIA-ZZX-000-EBF-02</span></td><td class="c2">兰梅塬堡址</td><td class="c nm3">czy</td><td class="c st">待审核</td><td class="c dt"><span class="sd">2016-08-18 17:50:56</span></td><td class="c op"><span class="bx bi">查看</span><span class="bx bd">审核</span></td></tr>
<tr><td class="c1"><span class="sx">SN-SIA-ZZX-000-HAB-02</span></td><td class="c2">姜维台</td><td class="c nm3">czy</td><td class="c st">待审核</td><td class="c dt"><span class="sd">2016-08-18 15:40:55</span></td><td class="c op"><span class="bx bi">查看</span><span class="bx bd">审核</span></td></tr>
<tr><td class="c1"><span class="sx">SN-SIA-ZZX-000-FAC-01</span></td><td class="c2">丹阳观</td><td class="c nm3">czy</td><td class="c st">待审核</td><td class="c dt"><span class="sd">2016-08-18 15:36:57</span></td><td class="c op"><span class="bx bi">查看</span><span class="bx bd">审核</span></td></tr>
<tr><td class="c1"><span class="sx">SN-SIA-ZZX-000-FAC-03</span></td><td class="c2">孟仙庵</td><td class="c nm3">czy</td><td class="c st">待审核</td><td class="c dt"><span class="sd">2016-08-17 17:09:36</span></td><td class="c op"><span class="bx bi">查看</span><span class="bx bd">审核</span></td></tr>
<tr><td class="c1"><span class="sx">SN-SIA-ZZX-000-HBA-01</span></td><td class="c2">熨斗曲子</td><td class="c nm3">czy</td><td class="c st">待审核</td><td class="c dt"><span class="sd">2016-08-17 17:08:35</span></td><td class="c op"><span class="bx bi">查看</span><span class="bx bd">审核</span></td></tr>
</table>

<!-- pager -->
<div class="abs pg" style="left:760px;width:32px;border-left:1px solid #ddd;border-radius:4px 0 0 4px"><svg width="13" height="9" viewBox="0 0 13 9"><path d="M1 0v9M7 0L2 4.500L7 9zM12.500 0L7.500 4.500L12.500 9z" fill="#337ab7" stroke="#337ab7" stroke-width="1.500" stroke-linejoin="round" style="stroke-width:1.200"/></svg></div>
<div class="abs pg" style="left:792px;width:32px"><svg width="12" height="9" viewBox="0 0 12 9"><path d="M6 0L1 4.500L6 9zM11.500 0L6.500 4.500L11.500 9z" fill="#337ab7"/></svg></div>
<div class="abs pg" style="left:824px;width:26px;background:#c8d6e8">1</div>
<div class="abs pg" style="left:850px;width:28px">2</div>
<div class="abs pg" style="left:878px;width:32px"><svg width="12" height="9" viewBox="0 0 12 9"><path d="M0.500 0L5.500 4.500L0.500 9zM6 0L11 4.500L6 9z" fill="#337ab7"/></svg></div>
<div class="abs pg" style="left:910px;width:31.500px;border-radius:0 4px 4px 0"><svg width="13" height="9" viewBox="0 0 13 9"><path d="M0.500 0L5.500 4.500L0.500 9zM6 0L11 4.500L6 9zM12 0v9" fill="#337ab7" stroke="#337ab7" stroke-width="1.200"/></svg></div>
<div class="abs" style="left:942.500px;top:602.500px;width:54px;height:28px;border:1px solid #ccc;border-radius:4px 0 0 4px;background:#fff"></div>
<div class="abs" style="left:996px;top:602.500px;width:42px;height:28px;border:1px solid #ccc;border-left:0;border-radius:0 4px 4px 0;background:#f4f4f4;font-size:12px;line-height:25px;text-align:center;color:#444">跳转</div>
<div class="abs" style="left:1181.500px;top:608.500px;font-size:13.5px;line-height:20px;white-space:nowrap;color:#333">(结果总计17条,共2页)</div>

<!-- watermark -->
<div class="abs wm" style="left:996px;top:578px;font-size:52px;line-height:52px;font-weight:bold;transform:scaleX(.85);transform-origin:0 0;color:rgba(255,255,255,.5);text-shadow:2px 2px 3px rgba(0,0,0,.2)">D</div>
<div class="abs wm" style="left:1035px;top:599px;font-size:26px;line-height:30px;font-weight:bold;letter-spacing:-1px;opacity:.8">TMAP</div>
<div class="abs wm" style="left:1116px;top:591px;font-size:30px;line-height:40px;letter-spacing:.3px">中科数景</div>
<div class="abs wm" style="left:1001px;top:626.500px;font-size:35.400px;line-height:40px">www.dtmap.com.cn</div>
</div>
</body>
</html>
